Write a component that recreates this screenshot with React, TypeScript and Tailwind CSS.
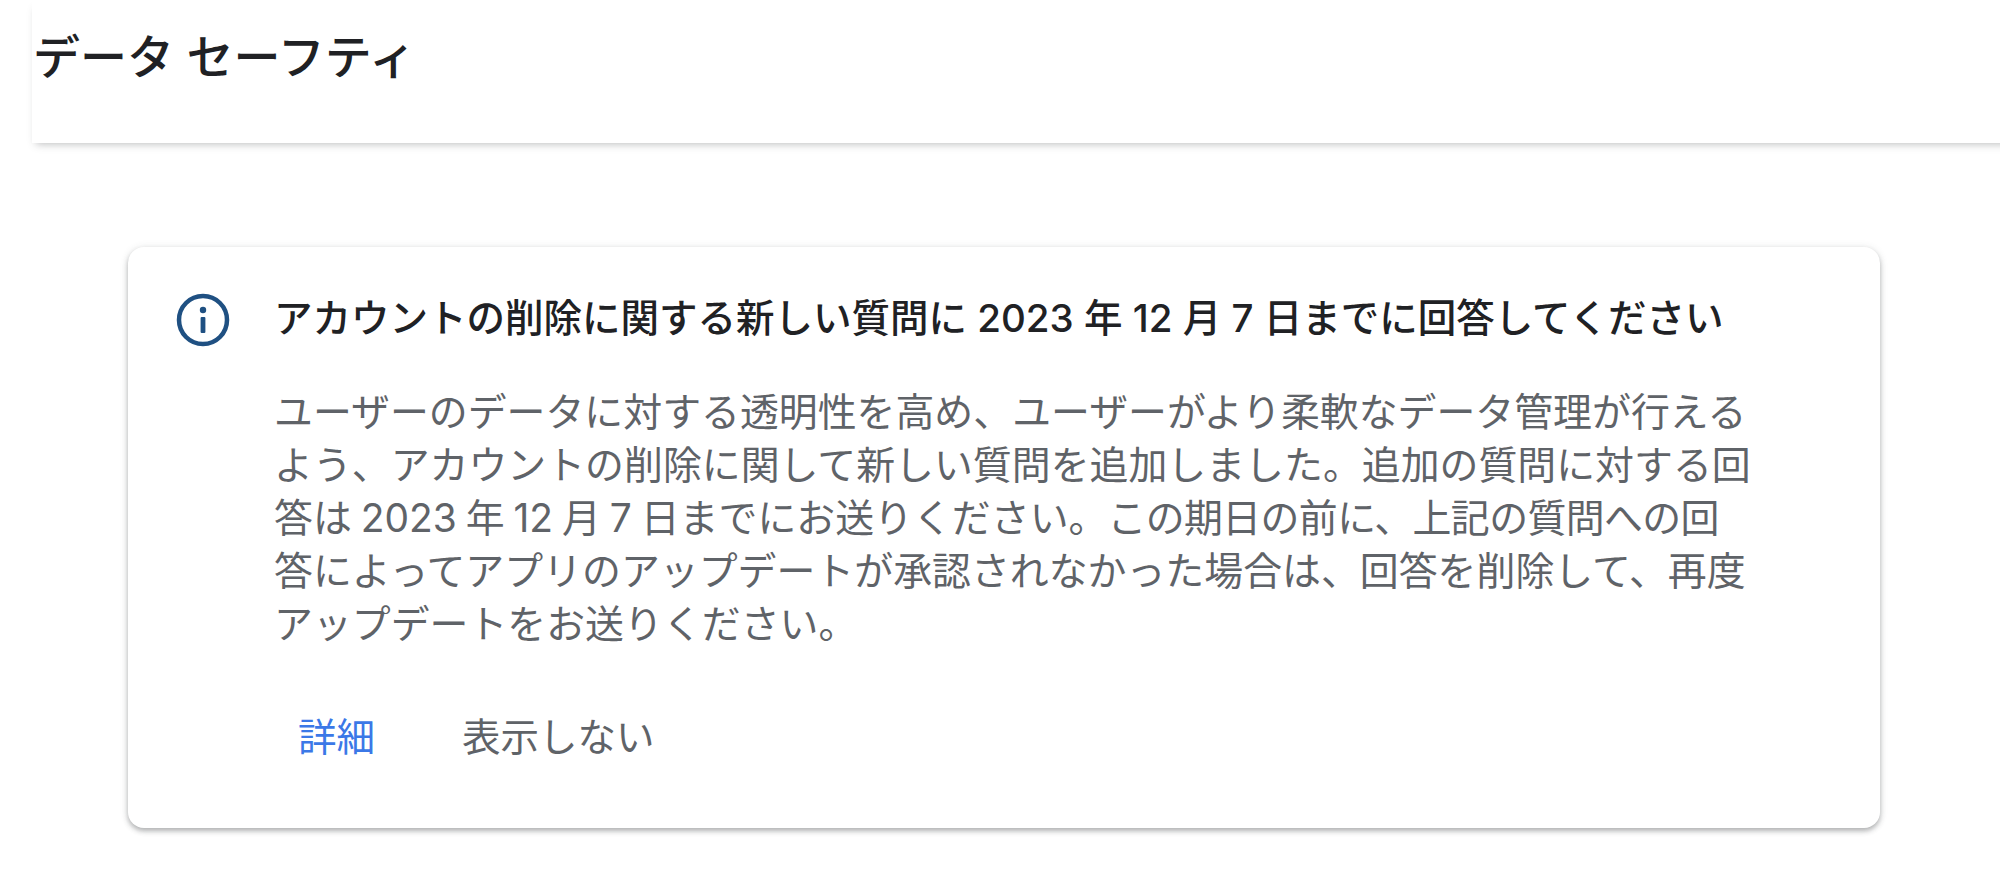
const FONT = "[font-family:'Inter','Noto_Sans_CJK_JP',sans-serif]";

function InfoIcon() {
  return (
    <svg width="54" height="54" viewBox="0 0 54 54" fill="none" className="shrink-0">
      <circle cx="27" cy="27" r="24" stroke="#1f5082" strokeWidth="4.5" />
      <circle cx="27" cy="17" r="3.2" fill="#1f5082" />
      <rect x="24.6" y="24" width="4.8" height="16" rx="1" fill="#1f5082" />
    </svg>
  );
}

export default function App() {
  return (
    <div className={`w-[2000px] h-[886px] overflow-hidden bg-white ${FONT}`}>
      {/* page header */}
      <div className="ml-8 w-[1990px] h-[143px] pl-px pt-[29px] shadow-[0_5px_8px_-4px_rgba(60,64,67,0.35)]">
        <h1 className="text-[47px] leading-[56px] font-medium text-[#202124]">
          データ セーフティ
        </h1>
      </div>

      {/* notice card */}
      <div className="ml-32 mt-[104px] w-[1752px] h-[581px] rounded-2xl bg-white pl-12 pt-[46px] flex gap-[44px] shadow-[0_3px_5px_rgba(60,64,67,0.35),0_1px_8px_rgba(60,64,67,0.12)]">
        <InfoIcon />
        <div className="min-w-0">
          <h2 className="text-[38.5px] leading-[50px] font-medium whitespace-nowrap text-[#202124]">
            アカウントの削除に関する新しい質問に 2023 年 12 月 7 日までに回答してください
          </h2>
          <div className="mt-[42px] text-[38.9px] leading-[53px] whitespace-nowrap text-[#5f6368]">
            <p>ユーザーのデータに対する透明性を高め、ユーザーがより柔軟なデータ管理が行える</p>
            <p>よう、アカウントの削除に関して新しい質問を追加しました。追加の質問に対する回</p>
            <p className="[word-spacing:-2px]">
              答は 2023 年 12 月 7 日までにお送りください。
              <span className="tracking-[-0.6px]">この期日の前に、上記の質問への回</span>
            </p>
            <p>答によってアプリのアップデートが承認されなかった場合は、回答を削除して、再度</p>
            <p>アップデートをお送りください。</p>
          </div>
          <div className="mt-[55px] flex gap-[87px] pl-6 text-[38.5px] leading-[64px] font-normal">
            <button className="text-[#3b78e7]">詳細</button>
            <button className="text-[#5f6368]">表示しない</button>
          </div>
        </div>
      </div>
    </div>
  );
}
